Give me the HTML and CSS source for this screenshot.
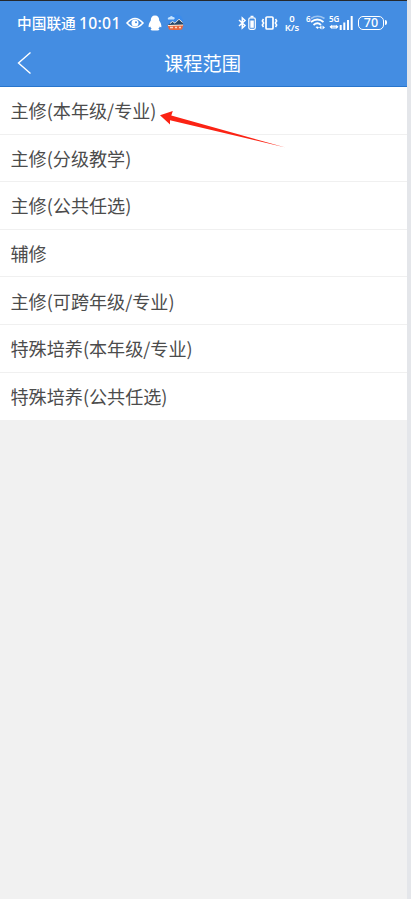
FILE: index.html
```html
<!DOCTYPE html>
<html lang="zh-CN">
<head>
<meta charset="utf-8">
<title>课程范围</title>
<link rel="stylesheet" href="styles.css">
</head>
<body>
<div class="screen">
  <header class="header">
    <div class="status">
      <span class="carrier">中国联通</span>
      <span class="clock">10:01</span>
      <svg class="eye" width="18" height="14" viewBox="0 0 18 14"><path d="M1 7Q9-2 17 7Q9 16 1 7Z" fill="none" stroke="#fff" stroke-width="1.6"/><circle cx="9" cy="7" r="3.5" fill="#fff"/><circle cx="10" cy="6.3" r="1" fill="#448de2"/></svg>
      <svg class="penguin" width="14" height="16" viewBox="0 0 14 16"><path d="M7 .5C4 .5 2.700 2.600 2.800 5.500C1.500 7.500.4 9.600.6 12C1 12.700 1.700 12 2.300 11.500C2.500 12.500 3 13 3.700 13.500C2 14 2.500 15.500 4.500 15.500H9.500C11.500 15.500 12 14 10.300 13.500C11 13 11.500 12.500 11.700 11.500C12.300 12 13 12.700 13.400 12C13.600 9.600 12.500 7.500 11.200 5.500C11.300 2.600 10 .5 7 .5Z" fill="#fff"/></svg>
      <svg class="scene" width="17" height="17" viewBox="0 0 17 17"><path d="M5 2Q9-.5 14 2L16 6V10H1V6Z" fill="#3b8bea"/><path d="M1 5.500Q0 3.500 3 3Q4 1 6 3Q9 3.500 7 5.500Z" fill="#c5e3ff"/><path d="M1 11L5 8L8 9L12 5.500L16 9V11.500H1Z" fill="#294869"/><path d="M3 9.500L5.500 7.500L8 9.200L12 5.200L15.500 8.500" fill="none" stroke="#e9e2dc"/><path d="M.5 11H16.500L15 15.500Q8 16.500 2 15.500Z" fill="#e8673d"/><path d="M1 11.500L16 11" fill="none" stroke="#fff1df"/><path d="M3 13.500H6M8 13.500H10M12 13.500H14" stroke="#ffd5bd" stroke-width="1.500"/></svg>
      <svg class="bt" width="19" height="16" viewBox="0 0 19 16"><path d="M1 5L7 10.500L4.300 13V3L7 5.500L1 11" fill="none" stroke="#fff" stroke-width="1.500"/><rect x="10.800" y="2.800" width="6.500" height="11.500" rx="1.500" fill="none" stroke="#fff" stroke-width="1.200"/><path d="M12.500 1.500H15.500" stroke="#fff" stroke-width="1.500"/><path d="M12.300 5.500H15.800V12.800H12.300Z" fill="#fff"/></svg>
      <svg class="vibrate" width="17" height="16" viewBox="0 0 17 16"><rect x="5" y="2" width="7" height="12" rx="1" fill="none" stroke="#fff" stroke-width="1.700"/><path d="M2.500 4L1.300 6L2.700 8L1.300 10L2.500 12M14.500 4L15.700 6L14.300 8L15.700 10L14.500 12" fill="none" stroke="#fff" stroke-width="1.500"/></svg>
      <span class="speed"><span>0</span><span>K/s</span></span>
      <svg class="wifi" width="20" height="18" viewBox="0 0 20 18"><text class="tiny" x="0" y="7.500">6</text><path d="M5 4.500Q11.500 0 18.500 4.500" fill="none" stroke="#9bc3f1" stroke-width="1.700"/><path d="M5 8Q11.500 3 17.500 8M7.500 11Q11.500 7.500 15 11" fill="none" stroke="#fff" stroke-width="1.800"/><path d="M9.500 13L11.500 15L13 13.500Q11.500 12 9.500 13Z" fill="#fff"/><path d="M13 13.500L15.500 11.500V15.500ZM19 13.500L16.500 11.500V15.500Z" fill="#fff"/></svg>
      <svg class="signal" width="25" height="18" viewBox="0 0 25 18"><text class="tiny" x="0" y="8">5G</text><path d="M.5 12.800L3 10.700V15ZM9.500 12.800L7 10.700V15Z" fill="#fff"/><path d="M4 11V15M6 11V15M1 12.800H9" stroke="#fff"/><path d="M11.700 11V16M15.300 8.500V16M19 6V16M22.700 2V16" stroke="#fff" stroke-width="2"/></svg>
      <span class="battery">70</span>
    </div>
    <div class="nav">
      <svg class="back" width="15" height="24" viewBox="0 0 15 24"><path d="M13.500 1.500L1.500 12L13.500 22.500" fill="none" stroke="#fff" stroke-width="1.400"/></svg>
      <h1 class="title">课程范围</h1>
    </div>
  </header>
  <ul class="list">
    <li>主修(本年级/专业)
      <svg class="arrow" width="130" height="44" viewBox="0 0 130 44"><path d="M3 8.300L15.800 4L14.300 8.500L128.500 40.500L13 13.300L13 17.500Z" fill="#fb2314"/></svg></li>
    <li>主修(分级教学)</li>
    <li>主修(公共任选)</li>
    <li>辅修</li>
    <li>主修(可跨年级/专业)</li>
    <li>特殊培养(本年级/专业)</li>
    <li>特殊培养(公共任选)</li>
  </ul>
</div>
</body>
</html>
```
FILE: styles.css
```css
* { box-sizing: border-box; }
body {
  margin: 0;
  background: #e4e6ea;
  font-family: "Noto Sans", "Noto Sans CJK SC", sans-serif;
}
.screen { width: 407px; height: 899px; background: #f1f1f1; }
.header {
  height: 87px;
  background: #448de2;
  border-top: 1px solid #25282c;
  border-bottom: 1px solid #2875cc;
  color: #fff;
}
.status { height: 43px; padding-left: 17px; display: flex; align-items: center; }
.status > * { flex: none; }
.carrier { width: 62px; font: 500 14.700px "Noto Sans CJK SC", sans-serif; white-space: nowrap; }
.clock { width: 46px; font: 500 15.700px "Noto Sans", sans-serif; letter-spacing: .3px; }
.eye { margin-left: 1px; }
.penguin { margin-left: 4px; }
.scene { margin-left: 5px; }
.bt { margin-left: 54px; }
.vibrate { margin-left: 4px; }
.speed {
  width: 18px;
  margin-left: 5px;
  display: flex;
  flex-direction: column;
  align-items: center;
  font: 600 9.500px/9px "Noto Sans", sans-serif;
}
.wifi { margin-left: 5px; }
.signal { margin-left: 3px; }
.tiny { font: 600 8px "Noto Sans", sans-serif; fill: #fff; }
.battery {
  position: relative;
  width: 26px;
  height: 14px;
  margin-left: 4px;
  border: 1.500px solid #fff;
  border-radius: 5px;
  font: 500 12.500px/12px "Noto Sans", sans-serif;
  text-align: center;
}
.battery::after {
  content: "";
  position: absolute;
  right: -4px;
  top: 3px;
  width: 2px;
  height: 5px;
  border-radius: 0 2px 2px 0;
  background: #fff;
}
.nav { height: 38px; padding-left: 17px; display: flex; align-items: center; }
.title {
  width: 79px;
  margin: 0 0 0 132px;
  font: 400 19.300px/28px "Noto Sans CJK SC", sans-serif;
  white-space: nowrap;
}
.list { height: 333px; margin: 0; padding: 0; list-style: none; background: #fff; }
.list li {
  height: 47.600px;
  padding-left: 10.500px;
  display: flex;
  align-items: center;
  position: relative;
  border-bottom: 1px solid #f0f0f0;
  color: #4c4c4c;
  font: 400 18.100px/28px "Noto Sans CJK SC", sans-serif;
}
.list li:last-child { border-bottom: 0; }
.arrow { position: absolute; left: 157px; top: 20px; }
```
